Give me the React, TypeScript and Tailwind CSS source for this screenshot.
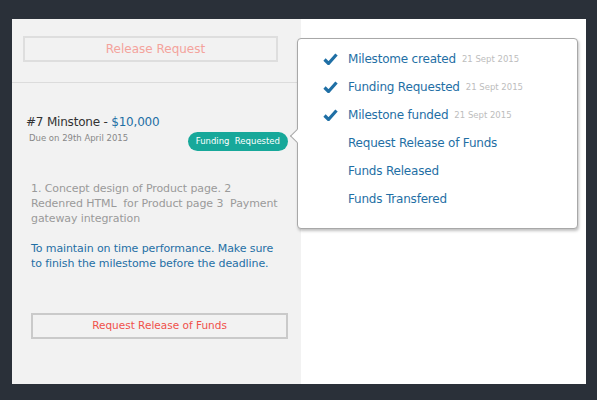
import { ReactNode } from "react";

const font = { fontFamily: '"DejaVu Sans", "Noto Sans", sans-serif' };

function Check() {
  return (
    <svg width="15" height="12" viewBox="0 0 15 12" className="shrink-0">
      <path d="M1.5 6.5 L5.5 10.5 L13.5 1.5" fill="none" stroke="#1f6fa5" strokeWidth="3.2" strokeLinejoin="miter" />
    </svg>
  );
}

function Step(props: { done?: boolean; label: string; date?: string; children?: ReactNode }) {
  return (
    <div className="flex items-center h-[28px]">
      <div className="w-[25px] flex justify-start">{props.done && <Check />}</div>
      <span className="text-[12px] text-[#1f6fa5] tracking-[-0.2px]">{props.label}</span>
      {props.date && <span className="text-[8.5px] text-[#bdbdbd] ml-[6px] mt-[1px]">{props.date}</span>}
    </div>
  );
}

export default function App() {
  return (
    <div className="w-[597px] h-[400px] bg-[#2a3039] pt-[19px] pl-[12px] pr-[11px] pb-[16px]" style={font}>
      <div className="relative flex h-[365px]">
        <div className="w-[289px] bg-[#f2f2f2] flex flex-col">
          <div className="pt-[17px] pl-[11px] pr-[23px] pb-[20px] border-b border-[#dcdcdc]">
            <div className="h-[26px] border-2 border-[#dedede] flex items-center justify-center pl-[10px] text-[12px] text-[#f4a39c]">
              Release Request
            </div>
          </div>
          <div className="pl-[14px] pr-[13px] pt-[31px]">
            <div className="text-[12px] text-[#333] leading-[16px] tracking-[-0.2px]">
              #7 Minstone - <span className="text-[#1f6fa5]">$10,000</span>
            </div>
            <div className="flex items-start justify-between">
              <div className="text-[8.5px] text-[#888] pl-[3px] pt-[2px]">Due on 29th April 2015</div>
              <div className="mt-[2px] h-[19px] px-[8px] rounded-full bg-[#17a89a] text-white text-[8.5px] flex items-center">
                Funding&nbsp; Requested
              </div>
            </div>
            <div className="pl-[5px] pr-[10px] mt-[30px] text-[11px] leading-[15px] text-[#9a9a9a] tracking-[-0.1px]">
              1. Concept design of Product page. 2 Redenred HTML&nbsp; for Product page 3&nbsp; Payment gateway integration
            </div>
            <div className="pl-[5px] pr-[10px] mt-[15px] text-[11px] leading-[15px] text-[#1f6fa5] tracking-[-0.1px]">
              To maintain on time performance. Make sure to finish the milestome before the deadline.
            </div>
            <div className="ml-[5px] mt-[42px] h-[26px] border-2 border-[#cacaca] flex items-center justify-center text-[10.5px] text-[#f0504a]">
              Request Release of Funds
            </div>
          </div>
        </div>
        <div className="flex-1 bg-white" />
        <div className="absolute left-[285px] top-[19px] w-[281px] h-[191px] bg-white border border-[#a8a8a8] rounded-[4px] shadow-[1px_2px_3px_rgba(0,0,0,0.25)] pl-[25px] pt-[6px]">
          <div className="absolute left-[-6px] top-[92px] w-[10px] h-[10px] bg-white border-l border-b border-[#a8a8a8] rotate-45" />
          <Step done label="Milestome created" date="21 Sept 2015" />
          <Step done label="Funding Requested" date="21 Sept 2015" />
          <Step done label="Milestone funded" date="21 Sept 2015" />
          <Step label="Request Release of Funds" />
          <Step label="Funds Released" />
          <Step label="Funds Transfered" />
        </div>
      </div>
    </div>
  );
}
